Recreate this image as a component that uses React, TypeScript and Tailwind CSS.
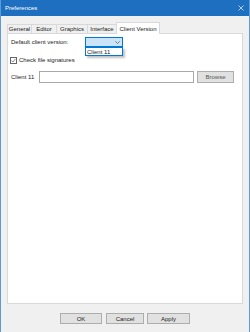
import React from "react";

export default function App() {
  return (
    <div className="w-[250px] h-[332px] flex flex-col bg-[#f0f0f0] border-x border-[#5f9ad4] overflow-hidden font-['Liberation_Sans',Arial,sans-serif] text-[6px] leading-none text-[#222]">
      <div className="h-[16px] shrink-0 bg-[#1f6fc1] flex items-center justify-between pl-[4px] pr-[4px] text-white">
        <span className="text-[6px]">Preferences</span>
        <svg width="6" height="6" viewBox="0 0 6 6" className="mr-[1px]">
          <path d="M0.5 0.5 L5.5 5.5 M5.5 0.5 L0.5 5.5" stroke="#dbe8f6" strokeWidth="0.8" />
        </svg>
      </div>
      <div className="flex-1 flex flex-col px-[6px]">
        <div className="mt-[6px] h-[11px] flex items-end">
          <div className="w-[25px] h-[9px] border border-b-0 border-[#d9d9d9] flex items-center justify-center">General</div>
          <div className="w-[26px] -ml-px h-[9px] border border-b-0 border-[#d9d9d9] flex items-center justify-center">Editor</div>
          <div className="w-[32px] -ml-px h-[9px] border border-b-0 border-[#d9d9d9] flex items-center justify-center">Graphics</div>
          <div className="w-[30px] -ml-px h-[9px] border border-b-0 border-[#d9d9d9] flex items-center justify-center">Interface</div>
          <div className="w-[44px] -ml-px h-[12px] -mb-px relative z-10 bg-white border border-b-0 border-[#d9d9d9] flex items-center justify-center">Client Version</div>
        </div>
        <div className="h-[271px] shrink-0 border border-[#d9d9d9] bg-white relative flex flex-col">
          <div className="mt-[3px] h-[10px] flex items-center pl-[3px]">
            <span className="w-[74px]">Default client version:</span>
            <div className="w-[38px] h-[10px] bg-[#cce4f7] border border-[#0078d7] flex items-center justify-end pr-[2px]">
              <svg width="5" height="3" viewBox="0 0 5 3">
                <path d="M0.3 0.3 L2.5 2.5 L4.7 0.3" stroke="#555" strokeWidth="0.7" fill="none" />
              </svg>
            </div>
          </div>
          <div className="mt-[9px] h-[8px] flex items-center pl-[2px]">
            <div className="w-[7px] h-[7px] border border-[#666] flex items-center justify-center bg-white">
              <svg width="5" height="5" viewBox="0 0 5 5">
                <path d="M0.5 2.6 L1.9 4 L4.5 0.8" stroke="#555" strokeWidth="0.7" fill="none" />
              </svg>
            </div>
            <span className="ml-[2px]">Check file signatures</span>
          </div>
          <div className="mt-[7px] h-[12px] flex items-center pl-[3px]">
            <span className="w-[28px]">Client 11</span>
            <div className="w-[155px] h-[12px] border border-[#a8a8a8] bg-white"></div>
            <div className="ml-[3px] w-[37px] h-[12px] bg-[#e1e1e1] border border-[#adadad] flex items-center justify-center text-[#555]">Browse</div>
          </div>
          <div className="absolute left-[77px] top-[13px] w-[38px] h-[9px] bg-white border border-[#0078d7] flex items-center pl-[1px] shadow-[2px_2px_2px_rgba(0,0,0,0.25)]">
            Client 11
          </div>
        </div>
        <div className="mt-[9px] h-[11px] flex">
          <div className="ml-[53px] w-[42px] h-[11px] bg-[#e1e1e1] border border-[#adadad] flex items-center justify-center">OK</div>
          <div className="ml-[4px] w-[38px] h-[11px] bg-[#e1e1e1] border border-[#adadad] flex items-center justify-center">Cancel</div>
          <div className="ml-[3px] w-[43px] h-[11px] bg-[#e1e1e1] border border-[#adadad] flex items-center justify-center">Apply</div>
        </div>
      </div>
    </div>
  );
}
